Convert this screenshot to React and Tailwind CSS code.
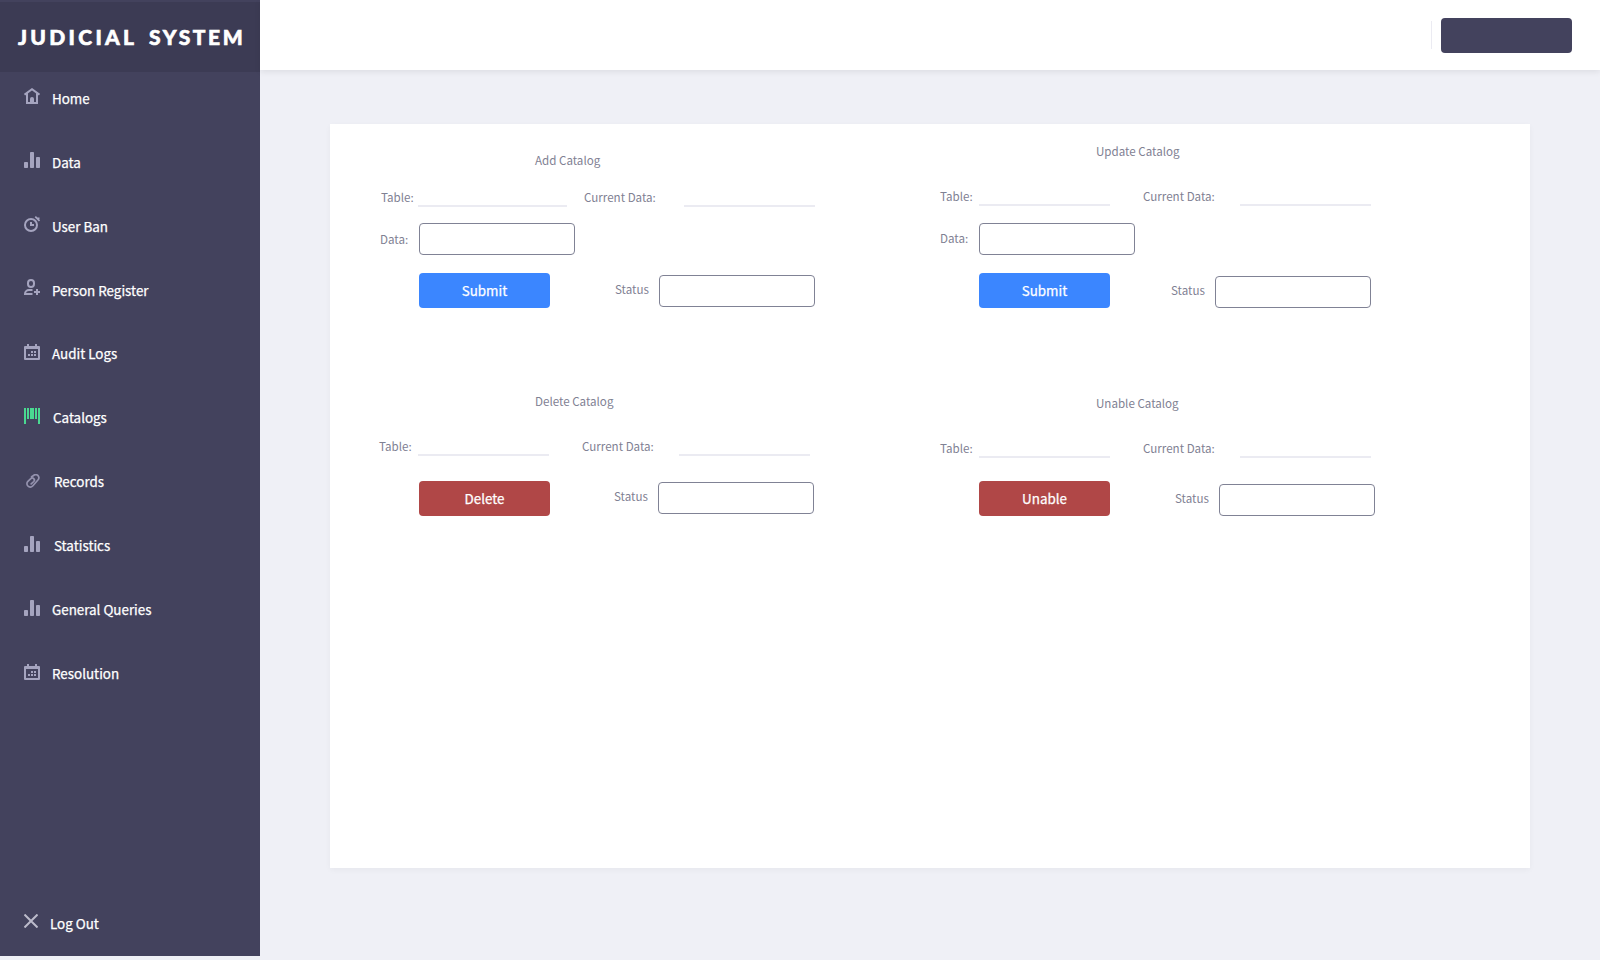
const BarsIcon = () => (
  <svg width="16" height="16" viewBox="0 0 16 16" fill="currentColor">
    <rect x="0" y="10" width="4" height="6" rx="0.8" />
    <rect x="6" y="0" width="4" height="16" rx="0.8" />
    <rect x="12" y="5" width="4" height="11" rx="0.8" />
  </svg>
);

const HomeIcon = () => (
  <svg width="16" height="16" viewBox="0 0 16 16" fill="none" stroke="currentColor" strokeWidth="2">
    <path d="M0.5 6.600 8 1.200l7.500 5.400M3 5.500V15h10V5.500" />
    <path d="M6 15v-4a2 2 0 0 1 4 0v4z" fill="currentColor" stroke="none" />
  </svg>
);

const ClockIcon = () => (
  <svg width="16" height="16" viewBox="0 0 16 16" fill="none" stroke="currentColor" strokeWidth="2">
    <circle cx="7" cy="9" r="6" />
    <path d="M7 6v3h3" />
    <path d="M11.300 0.700l4.200 4.200M12.500 2.300h3" strokeWidth="1.800" />
  </svg>
);

const PersonIcon = () => (
  <svg width="16" height="16" viewBox="0 0 16 16" fill="none" stroke="currentColor" strokeWidth="2">
    <rect x="4" y="1" width="6" height="7" rx="3" />
    <path d="M8.500 11H5a4 4 0 0 0-4 4h7.500M13 10v6M10 13h6" />
  </svg>
);

const CalendarIcon = () => (
  <svg width="16" height="16" viewBox="0 0 16 16" fill="currentColor">
    <path
      fillRule="evenodd"
      d="M3 0h2v2h6V0h2v2h2a1 1 0 0 1 1 1v12a1 1 0 0 1-1 1H1a1 1 0 0 1-1-1V3a1 1 0 0 1 1-1h2zM2 5v9h12V5z"
    />
    <path d="M7 7h2v2H7zM10 7h2v2h-2zM4 10h2v2H4zM7 10h2v2H7zM10 10h2v2h-2z" />
  </svg>
);

const BarcodeIcon = () => (
  <svg width="16" height="16" viewBox="0 0 16 16" fill="currentColor">
    <path d="M0 0h2v16H0zM3 0h2v11H3zM6 0h4v11H6zM11 0h2v11h-2zM14 0h2v16h-2z" />
  </svg>
);

const LinkIcon = () => (
  <svg className="ml-0.5 mt-0.5" width="14" height="14" viewBox="0 0 14 14" fill="none" stroke="currentColor" strokeWidth="1.700" strokeLinecap="round">
    <path d="M5.600 2.800 7.600 1.500a3.100 3.100 0 0 1 4.700 0.500 3.200 3.200 0 0 1-0.400 4L6.700 12a3.200 3.200 0 0 1-4.800 0 3.200 3.200 0 0 1 0-4.600l2.900-2.700a2 2 0 0 1 3 2.800L5.200 9.900" />
  </svg>
);

const CloseIcon = () => (
  <svg width="14" height="14" viewBox="0 0 14 14" fill="none" stroke="currentColor" strokeWidth="2">
    <path d="M0.500 0.500l13 13M13.500 0.500l-13 13" />
  </svg>
);

const navItems = [
  { label: "Home", Icon: HomeIcon, pad: "pl-3" },
  { label: "Data", Icon: BarsIcon, pad: "pl-3" },
  { label: "User Ban", Icon: ClockIcon, pad: "pl-3" },
  { label: "Person Register", Icon: PersonIcon, pad: "pl-3", iconClass: "-mt-px" },
  { label: "Audit Logs", Icon: CalendarIcon, pad: "pl-3", textClass: "-mt-px" },
  { label: "Catalogs", Icon: BarcodeIcon, pad: "pl-[13px]", textClass: "-mt-px", active: true },
  { label: "Records", Icon: LinkIcon, pad: "pl-3.5", textClass: "-mt-px", dim: true },
  { label: "Statistics", Icon: BarsIcon, pad: "pl-3.5", textClass: "-mt-px" },
  { label: "General Queries", Icon: BarsIcon, pad: "pl-3", textClass: "-mt-px" },
  { label: "Resolution", Icon: CalendarIcon, pad: "pl-3", textClass: "-mt-px" },
];

function NavItem({ label, Icon, pad, iconClass = "", textClass = "", active, dim }) {
  const color = active ? "text-[#4ad991]" : dim ? "text-[#9492ae]" : "text-[#a5a4bf]";
  return (
    <a className="flex h-16 items-start pl-6">
      <span className={`h-4 w-4 shrink-0 ${color} ${iconClass}`}>
        <Icon />
      </span>
      <span className={`${pad} ${textClass}`}>
        <span className="block pt-0.5 text-[13.4px] leading-4 text-white [-webkit-text-stroke:0.25px_white]">{label}</span>
      </span>
    </a>
  );
}

function Sidebar() {
  return (
    <aside className="flex h-[956px] w-[260px] shrink-0 flex-col bg-[#43425d]">
      <div className="mt-0.5 flex h-[70px] items-start bg-[#3c3b54] pl-[18px] pt-[21px] font-['Lato'] text-[21px] leading-[28px] font-black whitespace-nowrap text-white [-webkit-text-stroke:0.6px_white]">
        <span className="w-[131px] tracking-[3.3px]">JUDICIAL</span>
        <span className="tracking-[2.6px]">SYSTEM</span>
      </div>
      <nav className="flex flex-col pt-4">
        {navItems.map((item) => (
          <NavItem key={item.label} {...item} />
        ))}
      </nav>
      <a className="mt-auto mb-[26px] flex h-4 items-start pl-6 text-[#bcbbcb]">
        <CloseIcon />
        <span className="pl-3 pt-px text-[13.4px] leading-4 text-white [-webkit-text-stroke:0.25px_white]">Log Out</span>
      </a>
    </aside>
  );
}

const Label = ({ className = "", children }) => (
  <span className={`shrink-0 whitespace-nowrap text-[11.6px] leading-4 text-[#7f8193] ${className}`}>{children}</span>
);

const Underline = ({ className }) => <span className={`h-0.5 shrink-0 self-end bg-[#ebebf2] ${className}`} />;

const Field = ({ className = "" }) => (
  <input className={`h-8 w-[156px] shrink-0 rounded-[4px] border border-[#808295] bg-white ${className}`} />
);

const ActionButton = ({ className, children }) => (
  <button className={`h-[35px] w-[131px] shrink-0 rounded-[4px] pb-px text-center text-[13.4px] leading-4 text-white [-webkit-text-stroke:0.25px_white] ${className}`}>
    {children}
  </button>
);

function CatalogForm({ title, action, color, pad, titlePad, table, data, status }) {
  return (
    <form className={`flex flex-col ${pad}`}>
      <h2 className={`flex h-4 ${titlePad}`}>
        <Label>{title}</Label>
      </h2>
      <div className={`flex h-[18px] ${table.row}`}>
        <Label className={table.label}>Table:</Label>
        <Underline className={table.line} />
        <Label className={table.current}>Current Data:</Label>
        <Underline className="w-[131px]" />
      </div>
      {data && (
        <div className={`flex h-8 ${data.row}`}>
          <Label className={data.label}>Data:</Label>
          <Field />
        </div>
      )}
      <div className={`flex ${status.row}`}>
        <ActionButton className={color}>{action}</ActionButton>
        <Label className={status.label}>Status</Label>
        <Field className={status.field} />
      </div>
    </form>
  );
}

const forms = [
  {
    title: "Add Catalog",
    action: "Submit",
    color: "bg-[#3b86ff]",
    pad: "pt-7",
    titlePad: "pl-[205px]",
    table: { row: "mt-[21px] pl-[51px]", label: "w-[37px]", line: "w-[149px]", current: "ml-[17px] w-[100px]" },
    data: { row: "mt-4 pl-[50px]", label: "mt-2 w-[39px]" },
    status: { row: "mt-[18px] pl-[89px]", label: "ml-[65px] mt-2 w-[44px]", field: "mt-0.5" },
  },
  {
    title: "Update Catalog",
    action: "Submit",
    color: "bg-[#3b86ff]",
    pad: "pt-[19px]",
    titlePad: "pl-[206px]",
    table: { row: "mt-[29px] pl-[50px]", label: "w-[39px]", line: "w-[131px]", current: "ml-[33px] w-[97px]" },
    data: { row: "mt-[17px] pl-[50px]", label: "mt-[7px] w-[39px]" },
    status: { row: "mt-[18px] pl-[89px]", label: "ml-[61px] mt-[9px] w-[44px]", field: "mt-[3px]" },
  },
  {
    title: "Delete Catalog",
    action: "Delete",
    color: "bg-[#b04747]",
    pad: "pt-[17px]",
    titlePad: "pl-[205px]",
    table: { row: "mt-[29px] pl-[49px]", label: "w-[39px]", line: "w-[131px]", current: "ml-[33px] w-[97px]" },
    status: { row: "mt-[25px] pl-[89px]", label: "ml-[64px] mt-[7px] w-[44px]", field: "mt-px" },
  },
  {
    title: "Unable Catalog",
    action: "Unable",
    color: "bg-[#b04747]",
    pad: "pt-[19px]",
    titlePad: "pl-[206px]",
    table: { row: "mt-[29px] pl-[50px]", label: "w-[39px]", line: "w-[131px]", current: "ml-[33px] w-[97px]" },
    status: { row: "mt-[23px] pl-[89px]", label: "ml-[65px] mt-[9px] w-[44px]", field: "mt-[3px]" },
  },
];

export default function App() {
  return (
    <div className="flex h-[960px] w-[1600px] overflow-hidden bg-[#eff0f6] font-['Noto_Sans_CJK_SC',sans-serif]">
      <Sidebar />
      <div className="flex grow flex-col">
        <header className="flex h-[70px] shrink-0 items-center justify-end bg-white pr-7 shadow-[0_2px_6px_rgba(0,0,0,0.08)]">
          <span className="h-7 w-px bg-[#ebebf2]" />
          <button aria-label="Account" className="ml-[9px] h-[35px] w-[131px] rounded-[4px] bg-[#43425d]" />
        </header>
        <main className="grow pl-[70px] pt-[54px]">
          <section className="grid h-[744px] w-[1200px] grid-cols-[560px_640px] grid-rows-[252px_492px] bg-white shadow-[0_2px_6px_rgba(0,0,0,0.04)]">
            {forms.map((form) => (
              <CatalogForm key={form.title} {...form} />
            ))}
          </section>
        </main>
      </div>
    </div>
  );
}
